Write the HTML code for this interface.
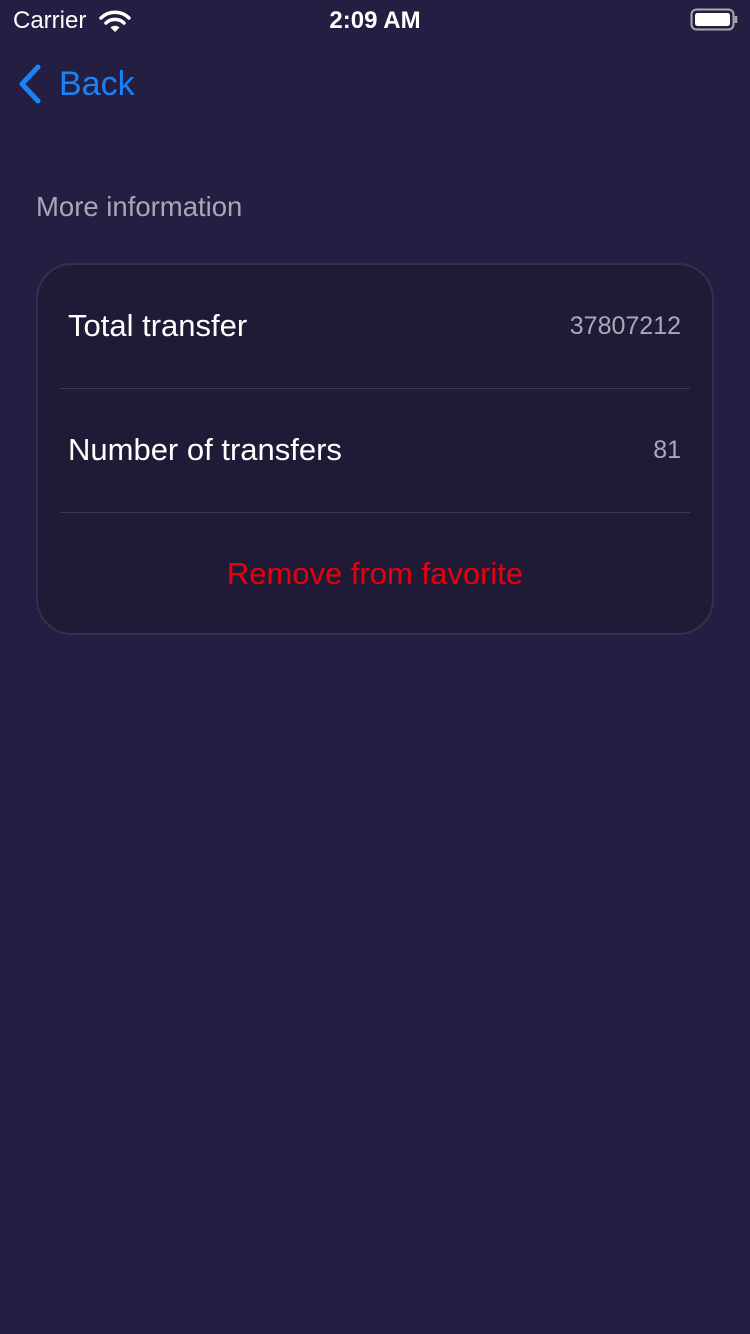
<!DOCTYPE html>
<html><head><meta charset="utf-8"><style>
*{margin:0;padding:0;box-sizing:border-box}
body{width:750px;height:1334px;background:#241e42;font-family:"Liberation Sans",sans-serif;position:relative;overflow:hidden;color:#fff}
.abs{position:absolute}
.card{left:36px;top:263px;width:678px;height:372px;border:2px solid #34304c;border-radius:36px;background:#1f1b37}
.row{position:absolute;left:0;right:0;height:124px;font-size:31px;font-weight:300}
.sep{position:absolute;left:22px;right:22px;height:1px;background:#3d3955}
</style></head><body>
<div class="abs" style="left:13px;top:6px;font-size:24px;line-height:30px">Carrier</div>
<svg class="abs" style="left:99px;top:9px" width="32" height="24" viewBox="0 0 32 24"><path d="M2 9a20 20 0 0 1 28 0" stroke="#fff" stroke-width="3.5" fill="none" stroke-linecap="round"/><path d="M7 14a13 13 0 0 1 18 0" stroke="#fff" stroke-width="3.5" fill="none" stroke-linecap="round"/><path d="M11.5 18.5a6.5 6.5 0 0 1 9 0L16 23z" fill="#fff"/></svg>
<div class="abs" style="left:0;width:750px;top:6px;text-align:center;font-size:24px;font-weight:bold;line-height:30px">2:09 AM</div>
<svg class="abs" style="left:690px;top:8px" width="48" height="24" viewBox="0 0 48 24"><rect x="1.5" y="1.5" width="42" height="20" rx="5" fill="none" stroke="#aaa" stroke-width="2"/><rect x="5" y="5" width="35" height="13" rx="2.5" fill="#fff"/><path d="M46 8v7" stroke="#aaa" stroke-width="2.5"/></svg>
<svg class="abs" style="left:16px;top:64px" width="28" height="40" viewBox="0 0 28 40"><path d="M22 3L6 20l16 17" stroke="#1a82f7" stroke-width="5" fill="none" stroke-linecap="round" stroke-linejoin="round"/></svg>
<div class="abs" style="left:59px;top:64px;font-size:34px;color:#1a82f7;line-height:40px">Back</div>
<div class="abs" style="left:36px;top:191px;font-size:27.5px;color:#a9a6b8;font-weight:300">More information</div>
<div class="abs card">
 <div class="row" style="top:0"><span class="abs" style="left:30px;top:43px">Total transfer</span><span class="abs" style="right:31px;top:47px;font-size:25px;color:#aaa8b5">37807212</span></div>
 <div class="sep" style="top:123px"></div>
 <div class="row" style="top:124px"><span class="abs" style="left:30px;top:43px">Number of transfers</span><span class="abs" style="right:31px;top:47px;font-size:25px;color:#aaa8b5">81</span></div>
 <div class="sep" style="top:247px"></div>
 <div class="row" style="top:248px;text-align:center"><span style="position:relative;top:43px;color:#e8000d">Remove from favorite</span></div>
</div>
</body></html>
